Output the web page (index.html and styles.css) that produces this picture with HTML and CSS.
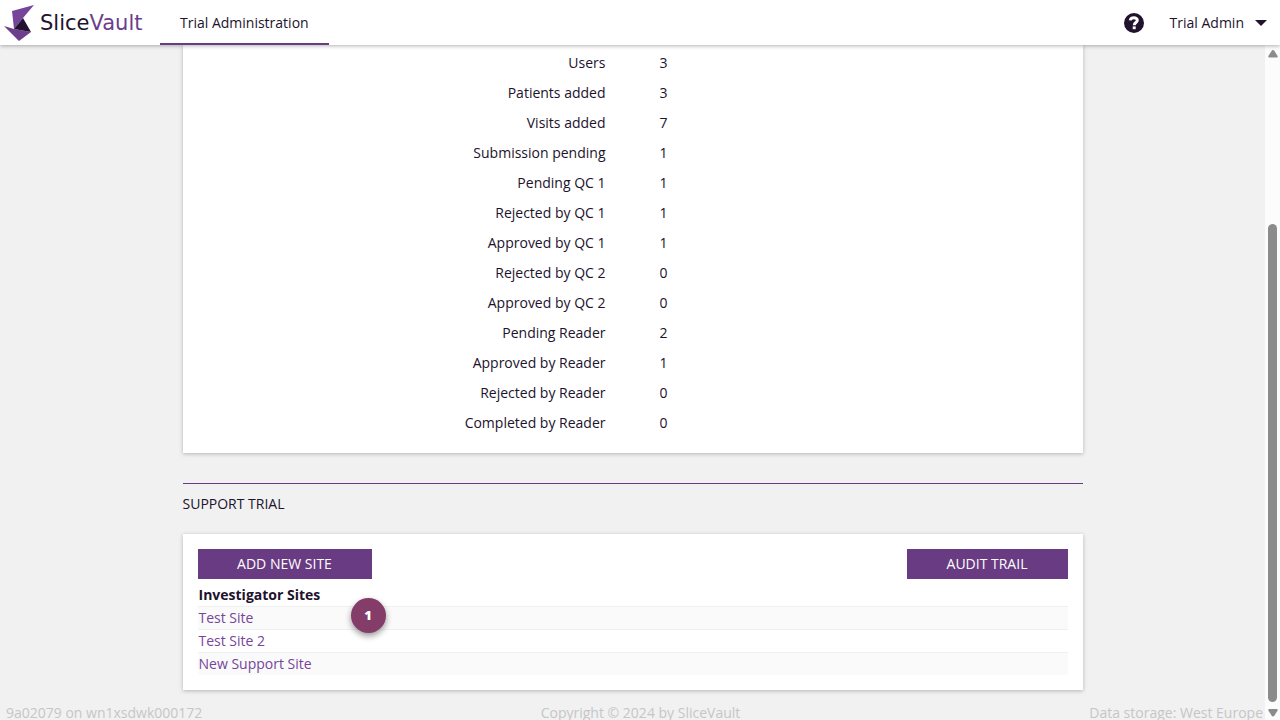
FILE: index.html
```html
<!DOCTYPE html>
<html lang="en">
<head>
	<meta charset="UTF-8" />
	<title>SliceVault - Trial Administration</title>
	<link rel="stylesheet" href="styles.css">
</head>
<body>
	<header class="topbar">
		<a class="logo" href="#">
			<svg class="logoMark" viewBox="0 0 32 38" aria-hidden="true">
				<path fill="#76459a" d="M30 1 8 7l2 18 9-11z" />
				<path fill="#6c3e8c" d="M0 22 10 25 27 28 15 37z" />
				<path fill="#23122f" d="M19 14 10 25 27 28z" />
			</svg>
			<span class="logoText">Slice<span class="logoVault">Vault</span></span>
		</a>
		<nav>
			<a class="tab" href="#">Trial Administration</a>
		</nav>
		<div class="tools">
			<button class="help" type="button" aria-label="Help">
				<svg viewBox="0 0 20 20">
					<circle cx="10" cy="10" r="10" fill="#21122d" />
					<path fill="none" stroke="#fff" stroke-width="3" d="M6.3 7.4C6.7 3.9 13.4 4 13.3 7.3c0 2.4-3 2-3 4.9" />
					<path fill="#fff" d="M8.7 13.4h3v2.8h-3z" />
				</svg>
			</button>
			<button class="user" type="button">
				Trial Admin
				<svg class="caret" viewBox="0 0 12 6" aria-hidden="true"><path fill="#21122d" d="M0 0h12L6 6z" /></svg>
			</button>
		</div>
	</header>
	<div class="page">
		<div class="content">
			<main class="container">
				<section class="card stats">
					<table class="statsTable">
						<tr><th scope="row">Users</th><td>3</td></tr>
						<tr><th scope="row">Patients added</th><td>3</td></tr>
						<tr><th scope="row">Visits added</th><td>7</td></tr>
						<tr><th scope="row">Submission pending</th><td>1</td></tr>
						<tr><th scope="row">Pending QC 1</th><td>1</td></tr>
						<tr><th scope="row">Rejected by QC 1</th><td>1</td></tr>
						<tr><th scope="row">Approved by QC 1</th><td>1</td></tr>
						<tr><th scope="row">Rejected by QC 2</th><td>0</td></tr>
						<tr><th scope="row">Approved by QC 2</th><td>0</td></tr>
						<tr><th scope="row">Pending Reader</th><td>2</td></tr>
						<tr><th scope="row">Approved by Reader</th><td>1</td></tr>
						<tr><th scope="row">Rejected by Reader</th><td>0</td></tr>
						<tr><th scope="row">Completed by Reader</th><td>0</td></tr>
					</table>
				</section>
				<h2 class="sectionTitle">SUPPORT TRIAL</h2>
				<section class="card sites">
					<div class="actions">
						<button class="btn btnAdd" type="button">ADD NEW SITE</button>
						<button class="btn btnAudit" type="button">AUDIT TRAIL</button>
					</div>
					<table class="siteTable">
						<thead>
							<tr><th scope="col">Investigator Sites</th></tr>
						</thead>
						<tbody>
							<tr><td><a href="#">Test Site</a></td></tr>
							<tr><td><a href="#">Test Site 2</a></td></tr>
							<tr><td><a href="#">New Support Site</a></td></tr>
						</tbody>
					</table>
					<span class="badge">1</span>
				</section>
			</main>
			<footer class="footer">
				<span>9a02079 on wn1xsdwk000172</span>
				<span class="copyright">Copyright © 2024 by SliceVault</span>
				<span class="storage">Data storage: West Europe</span>
			</footer>
		</div>
		<div class="scrollbar" aria-hidden="true">
			<svg class="arrow" viewBox="0 0 10 8"><path d="M5 0c.6 0 1 .4 1.300.8L9.600 6c.4.8 0 1.500-.8 1.500H1.200C.4 7.500 0 6.800.4 6L3.700.8C4 .4 4.400 0 5 0z" /></svg>
			<div class="track"><div class="thumb"></div></div>
			<svg class="arrow" viewBox="0 0 10 8"><path d="M5 7.500c.6 0 1-.4 1.300-.8L9.600 1.500C10 .7 9.600 0 8.800 0H1.200C.4 0 0 .7.4 1.500l3.300 5.200c.3.4.7.8 1.300.8z" /></svg>
		</div>
	</div>
</body>
</html>
```

FILE: styles.css
```css
*{
	box-sizing: border-box;
}
body{
	margin: 0;
	height: 100vh;
	display: flex;
	flex-direction: column;
	overflow: hidden;
	background: #f1f1f1;
	color: #21122d;
	font: 14px/20px "Open Sans", "Noto Sans", sans-serif;
}
a{
	color: #76459a;
	text-decoration: none;
}
button{
	border: 0;
	padding: 0;
	background: none;
	color: inherit;
	font: inherit;
	cursor: pointer;
}

/* top bar */
.topbar{
	display: flex;
	flex: none;
	height: 45px;
	background: #fff;
	box-shadow: 0 1px 4px rgba(0,0,0,.3);
	z-index: 1;
}
.logo{
	display: flex;
	align-items: center;
	gap: 4px;
	width: 160px;
	padding-left: 4px;
}
.logoMark{
	width: 32px;
	height: 38px;
}
.logoText{
	color: #21122d;
	font: 21px/30px "DejaVu Sans", sans-serif;
}
.logoVault{
	color: #6c3e8c;
}
.tab{
	display: block;
	height: 45px;
	padding: 0 20px;
	line-height: 45px;
	color: #21122d;
	border-bottom: 2px solid #693b82;
}
.tools{
	display: flex;
	align-items: center;
	gap: 26px;
	margin-left: auto;
	padding-right: 13px;
}
.help svg{
	display: block;
	width: 20px;
	height: 20px;
}
.user{
	display: flex;
	align-items: center;
	gap: 11px;
}
.caret{
	width: 12px;
	height: 6px;
}

/* page body */
.page{
	display: flex;
	flex: 1;
	min-height: 0;
}
.content{
	flex: 1;
	overflow: hidden;
}
.container{
	max-width: 900px;
	margin: 0 auto;
}
.card{
	padding: 15px;
	background: #fff;
	box-shadow: 0 1px 4px rgba(0,0,0,.25);
}
.stats{
	padding-top: 3px;
}
.statsTable,.siteTable{
	width: 100%;
	border-collapse: collapse;
}
.statsTable th,.statsTable td{
	width: 50%;
	height: 30px;
	padding: 0 27px;
	font-weight: normal;
	text-align: left;
}
.statsTable th{
	text-align: right;
}
.sectionTitle{
	margin: 30px 0 20px;
	padding-top: 10px;
	border-top: 1px solid #693b82;
	font-size: 14px;
	font-weight: normal;
}
.sites{
	position: relative;
}
.actions{
	display: flex;
	justify-content: space-between;
	margin-bottom: 4px;
}
.btn{
	height: 30px;
	background: #693b82;
	color: #fff;
	font-weight: 500;
}
.btnAdd{
	width: 174px;
}
.btnAudit{
	width: 161px;
}
.siteTable th,.siteTable td{
	height: 23px;
	padding: 0 1px;
	text-align: left;
}
.siteTable tbody tr{
	box-shadow: inset 0 1px #f0f0f0;
}
.siteTable tbody tr:nth-child(odd){
	background: #fafafa;
}
.badge{
	position: absolute;
	left: 168px;
	top: 64px;
	width: 35px;
	height: 35px;
	border-radius: 50%;
	background: #843c68;
	box-shadow: 0 3px 6px rgba(0,0,0,.4);
	color: #fff;
	font-size: 13px;
	font-weight: 800;
	line-height: 35px;
	text-align: center;
}
.footer{
	display: grid;
	grid-template-columns: 1fr auto 1fr;
	margin-top: 16px;
	padding: 0 2px 0 6px;
	color: #c6c6c6;
	line-height: 14px;
}
.copyright{
	padding-left: 12px;
}
.storage{
	text-align: right;
}

/* scrollbar */
.scrollbar{
	display: flex;
	flex-direction: column;
	align-items: center;
	gap: 7px;
	width: 15px;
	padding: 5px 0 3px;
	background: #fcfcfc;
}
.arrow{
	flex: none;
	width: 10px;
	height: 8px;
	fill: #8b8b8b;
}
.track{
	display: flex;
	flex: 1;
	align-items: flex-end;
}
.thumb{
	width: 9px;
	height: 75%;
	border-radius: 5px;
	background: #8b8b8b;
}
```
